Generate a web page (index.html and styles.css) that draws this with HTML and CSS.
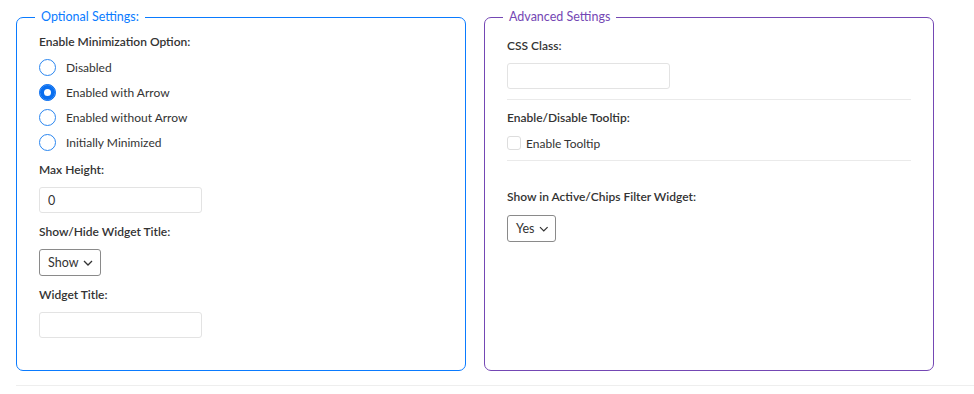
FILE: index.html
```html
<!DOCTYPE html>
<html lang="en">

<head>
	<meta charset="utf-8">
	<meta name="viewport" content="width=device-width, initial-scale=1.0">
	<title>Widget Settings</title>
	<link rel="stylesheet" href="styles.css">
</head>

<body>
	<div class="settings">
		<fieldset class="box optional">
			<legend>Optional Settings:</legend>

			<div class="label first">Enable Minimization Option:</div>
			<div class="radios">
				<label class="radio"><input type="radio" name="mini"> Disabled</label>
				<label class="radio"><input type="radio" name="mini" checked> Enabled with Arrow</label>
				<label class="radio"><input type="radio" name="mini"> Enabled without Arrow</label>
				<label class="radio"><input type="radio" name="mini"> Initially Minimized</label>
			</div>

			<div class="label">Max Height:</div>
			<input class="field" type="text" value="0">

			<div class="label">Show/Hide Widget Title:</div>
			<div class="select show">Show <svg width="10" height="6" viewBox="0 0 10 6"><path d="M1 1l4 4 4-4" fill="none" stroke="#333" stroke-width="1.3"/></svg></div>

			<div class="label">Widget Title:</div>
			<input class="field" type="text">
		</fieldset>

		<fieldset class="box advanced">
			<legend>Advanced Settings</legend>

			<div class="label">CSS Class:</div>
			<input class="field" type="text">
			<hr>

			<div class="label">Enable/Disable Tooltip:</div>
			<label class="check"><input type="checkbox"> Enable Tooltip</label>
			<hr>

			<div class="label spaced">Show in Active/Chips Filter Widget:</div>
			<div class="select yes">Yes <svg width="10" height="6" viewBox="0 0 10 6"><path d="M1 1l4 4 4-4" fill="none" stroke="#333" stroke-width="1.3"/></svg></div>
		</fieldset>
	</div>
	<div class="bottomline"></div>
</body>

</html>
```

FILE: styles.css
```css
* {
	box-sizing: border-box;
}

body {
	margin: 0;
	padding: 0;
	font-family: Lato, "Noto Sans", sans-serif;
	font-size: 12px;
	color: #333;
	background: #fff;
}

.settings {
	display: flex;
	gap: 18px;
	padding: 9px 0 0 16px;
}

.box {
	width: 450px;
	height: 362px;
	margin: 0;
	padding: 9px 22px 0 22px;
	border: 1px solid;
	border-radius: 7px;
	min-width: 0;
}

.optional {
	border-color: #0a7bff;
}

.advanced {
	border-color: #7447b4;
	padding-top: 13px;
}

legend {
	padding: 0 6px;
	margin-left: -4px;
	font-size: 12.5px;
	line-height: 16px;
}

.optional legend {
	color: #0a7bff;
}

.advanced legend {
	color: #7447b4;
}

.label {
	font-weight: 600;
	line-height: 16px;
	margin-bottom: 9px;
}

.label.first {
	margin-bottom: 5px;
}

.radios {
	margin-bottom: 7px;
}

.radio {
	display: flex;
	align-items: center;
	height: 25px;
	gap: 10px;
}

.radio input {
	appearance: none;
	margin: 0;
	width: 17px;
	height: 17px;
	border: 1px solid #2a86f0;
	border-radius: 50%;
	background: #fff;
}

.radio input:checked {
	background: #0a6ff0;
	border-color: #0a6ff0;
	box-shadow: inset 0 0 0 4px #0a6ff0, inset 0 0 0 8px #fff;
}

.field {
	display: block;
	width: 163px;
	height: 26px;
	margin: 0 0 11px 0;
	padding: 0 8px;
	border: 1px solid #e3e3e3;
	border-radius: 3px;
	font-family: inherit;
	font-size: 12.5px;
	color: #333;
}

.select {
	display: flex;
	align-items: center;
	gap: 5px;
	height: 27px;
	padding: 0 6px 0 8px;
	border: 1px solid #8a8a8a;
	border-radius: 3px;
	margin-bottom: 11px;
	font-size: 12.5px;
}

.show {
	width: 62px;
}

.yes {
	width: 49px;
}

hr {
	border: 0;
	border-top: 1px solid #eaeaea;
	margin: 0 0 10px 0;
}

.advanced .field {
	margin-bottom: 10px;
}

.check {
	display: flex;
	align-items: center;
	gap: 5px;
	height: 16px;
	margin-bottom: 9px;
}

.check input {
	appearance: none;
	margin: 0;
	width: 14px;
	height: 14px;
	border: 1px solid #ddd;
	border-radius: 3px;
}

.label.spaced {
	margin-top: 28px;
	margin-bottom: 10px;
}

.bottomline {
	margin: 14px 0 0 16px;
	border-top: 1px solid #eeeeee;
}
```
